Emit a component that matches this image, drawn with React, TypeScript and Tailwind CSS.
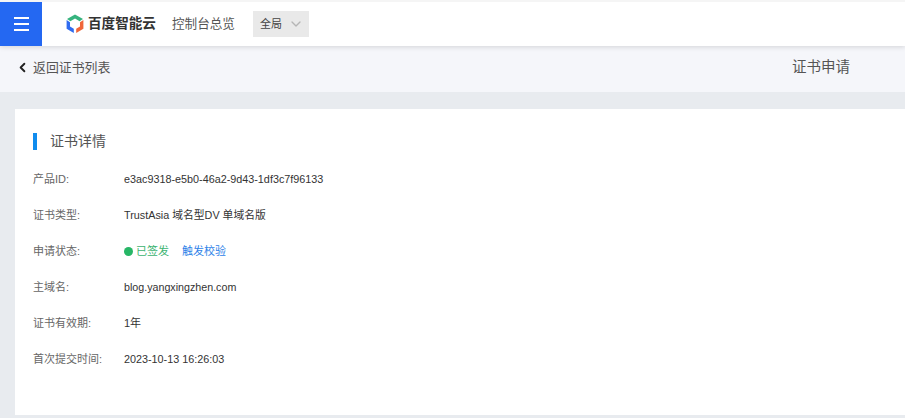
import React from "react";
import { ChevronDown, ChevronLeft } from "lucide-react";

const FONT = "font-['Liberation_Sans','Noto_Sans_CJK_SC',sans-serif]";

function Logo() {
  return (
    <svg width="18" height="20" viewBox="0 0 18 20" fill="none">
      <path d="M9 0.5 L17 5 L13.6 7.2 L9 4.6 L4.4 7.2 L1 5 Z" fill="#36b37e" />
      <path d="M0.6 6 L4 8.2 V12.6 L7.8 14.8 V19 L0.6 14.8 Z" fill="#2f6bf0" />
      <path d="M17.4 6 L14 8.2 V12.6 L10.2 14.8 V19 L17.4 14.8 Z" fill="#f0663a" />
    </svg>
  );
}

function Row({ label, children }: { label: string; children: React.ReactNode }) {
  return (
    <div className="flex h-9 items-center text-[11px]">
      <div className="w-[91px] shrink-0 text-[#666]">{label}</div>
      <div className="flex items-center text-[#333]">{children}</div>
    </div>
  );
}

export default function App() {
  return (
    <div className={`${FONT} flex h-[418px] w-[905px] flex-col overflow-hidden bg-[#e8ebef]`}>
      {/* top nav */}
      <div className="z-10 flex h-[46px] shrink-0 items-end border-t-2 border-[#f5f5f5] bg-white shadow-[0_1px_5px_rgba(0,0,0,0.14)]">
        <div className="flex h-[44px] w-[42px] flex-col items-center justify-center gap-[4px] bg-[#2468f2]">
          <span className="h-[2px] w-[15px] bg-white" />
          <span className="h-[2px] w-[15px] bg-white" />
          <span className="h-[2px] w-[15px] bg-white" />
        </div>
        <div className="flex h-[44px] items-center">
          <div className="ml-[24px] flex items-center gap-[4px]">
            <Logo />
            <span className="text-[13.6px] font-bold leading-none text-[#333]">百度智能云</span>
          </div>
          <span className="ml-[16px] text-[12.6px] text-[#555]">控制台总览</span>
          <div className="ml-[18px] flex h-[26px] w-[56px] items-center bg-[#e9e9e9] pl-[7px] text-[11px] text-[#444]">
            全局
            <ChevronDown className="ml-[6px] text-[#b5b5b5]" size={16} strokeWidth={2} />
          </div>
        </div>
      </div>

      {/* sub header */}
      <div className="flex h-[46px] shrink-0 items-center justify-between bg-[#f5f6fa] pb-[2px] pl-[15px] pr-[55px]">
        <div className="flex items-center gap-[3px] text-[12.9px] text-[#555]">
          <ChevronLeft className="text-[#222]" size={15} strokeWidth={3} />
          返回证书列表
        </div>
        <span className="text-[14.5px] text-[#555]">证书申请</span>
      </div>

      {/* detail card */}
      <div className="ml-[15px] mt-[17px] h-[306px] bg-white pl-[18px] pt-[22px]">
        <div className="mb-[9px] flex items-center">
          <span className="h-[17px] w-[4px] bg-[#108cee]" />
          <span className="ml-[13px] text-[14px] text-[#555]">证书详情</span>
        </div>
        <Row label="产品ID:">
          <span className="text-[10.8px]">e3ac9318-e5b0-46a2-9d43-1df3c7f96133</span>
        </Row>
        <Row label="证书类型:">
          <span className="text-[10.8px]">TrustAsia 域名型DV 单域名版</span>
        </Row>
        <Row label="申请状态:">
          <span className="h-[9px] w-[9px] rounded-full bg-[#27b666]" />
          <span className="ml-[3px] text-[#3cb371]">已签发</span>
          <span className="ml-[13px] text-[#2e82e8]">触发校验</span>
        </Row>
        <Row label="主域名:">
          <span className="text-[10.7px]">blog.yangxingzhen.com</span>
        </Row>
        <Row label="证书有效期:">1年</Row>
        <Row label="首次提交时间:">
          <span className="text-[10.8px]">2023-10-13 16:26:03</span>
        </Row>
      </div>
    </div>
  );
}
